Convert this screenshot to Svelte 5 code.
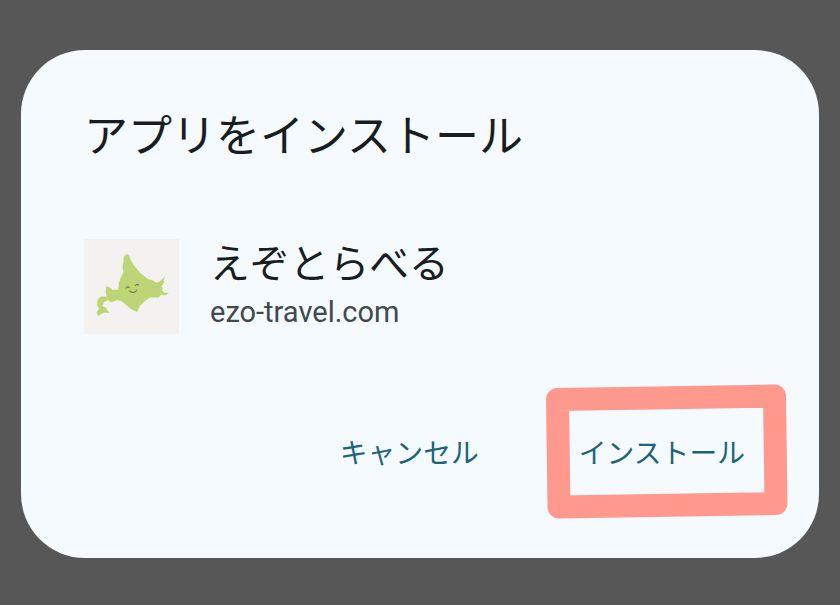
<script>
  const app = { name: 'えぞとらべる', host: 'ezo-travel.com' };
</script>

<main class="scrim">
  <div class="dialog" role="dialog" aria-labelledby="title">
    <h1 id="title">アプリをインストール</h1>

    <section class="app">
      <svg class="icon" viewBox="0 0 95 95" aria-hidden="true">
        <rect width="95" height="95" fill="#f3f2f0" />
        <path
          fill="#bdd577"
          d="M41.500 16 L43.500 15 L45.500 17.500 L46.500 21 L50 26.500 L56 33.500 L62 38.500 L65 40.500 L68 41 L72 43.500 L75 43 L81 37.500 L79.500 42 L80.500 43 L77.500 47.500 L78.500 49 L78 51.500 L80 53.500 L85 54 L81 56.500 L77 55.500 L75 58.500 L70 58.500 L66 58.500 L61 62 L56 66.500 L53 73 L47 70 L42 66 L37 62 L33 61 L27 63.500 L24 61 L20 63 L18.500 67 L22 68.500 L23 71 L26 74 L21 73.500 L18 74.500 L14.500 77 L12.500 73.500 L15 69.500 L13 66 L13.500 60.500 L17 57.500 L23 57.500 L21.500 53 L22.500 47 L26 48.500 L29 51 L34 50.500 L35 43.500 L37 38 L39.500 33 L38.500 28 L39.500 22 L39.500 18 Z"
        />
        <g fill="none" stroke="#6c7d38" stroke-width="1.1" stroke-linecap="round">
          <path d="M42 49Q43.500 47 45 48.500" />
          <path d="M51.500 46.500Q53 44.500 54.500 46" />
          <path d="M45.800 52Q49.500 55.500 53 51" />
        </g>
      </svg>
      <div class="details">
        <div class="name">{app.name}</div>
        <div class="host">{app.host}</div>
      </div>
    </section>

    <div class="actions">
      <button>キャンセル</button>
      <button class="install">
        インストール
        <svg class="marker" viewBox="0 0 244 138" aria-hidden="true">
          <path d="M14.500 17.500 L231.500 14 L233 121.500 L16 125 Z" />
        </svg>
      </button>
    </div>
  </div>
</main>

<style>
  :global(body) {
    margin: 0;
  }
  .scrim {
    box-sizing: border-box;
    width: 840px;
    height: 605px;
    padding: 50px 21px 47px;
    background: #575757;
    font-family: Roboto, 'Noto Sans CJK JP', sans-serif;
  }
  .dialog {
    box-sizing: border-box;
    height: 508px;
    padding: 55px 74px 0 63px;
    border-radius: 64px;
    background: #f5faff;
    color: #171d20;
  }
  h1 {
    margin: 0;
    font-size: 44px;
    line-height: 64px;
    font-weight: 400;
    white-space: nowrap;
  }
  .app {
    display: flex;
    gap: 31px;
    margin-top: 70px;
    height: 95px;
  }
  .icon {
    width: 95px;
    height: 95px;
  }
  .name {
    padding-top: 1px;
    font-size: 39.800px;
    line-height: 50px;
    white-space: nowrap;
  }
  .host {
    font-size: 29px;
    line-height: 34px;
    margin-top: 5px;
    color: #42494d;
  }
  .actions {
    display: flex;
    justify-content: flex-end;
    gap: 100px;
    margin-top: 100px;
  }
  button {
    position: relative;
    margin: 0;
    padding: 0;
    border: 0;
    background: none;
    color: #1c6478;
    font: inherit;
    font-size: 27.800px;
    line-height: 40px;
    white-space: nowrap;
  }
  .marker {
    position: absolute;
    left: -36px;
    top: -52px;
    width: 244px;
    height: 138px;
    overflow: visible;
    pointer-events: none;
  }
  .marker path {
    fill: none;
    stroke: #ff998e;
    stroke-width: 23;
    stroke-linejoin: round;
  }
</style>
